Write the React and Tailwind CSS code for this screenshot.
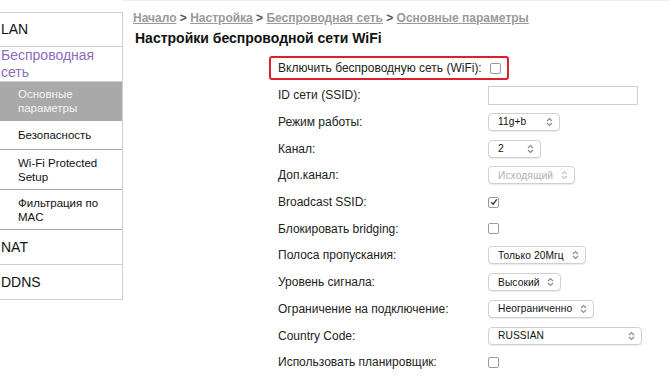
import React from 'react';

const font = { fontFamily: '"Liberation Sans", Arial, sans-serif' };

function Updown({ dim }) {
  return (
    <svg width="7" height="10" viewBox="0 0 7 10" className="shrink-0">
      <path d="M1 4L3.5 1.5L6 4M1 6L3.5 8.5L6 6" fill="none" stroke={dim ? '#c4c4c4' : '#8a8a8a'} strokeWidth="1.1" />
    </svg>
  );
}

function Select({ value, width, disabled }) {
  return (
    <div
      className={`flex h-[18px] items-center justify-between whitespace-nowrap rounded-[4px] border border-[#d0d0d0] bg-white pl-[9px] pr-[6px] text-[10.2px] tracking-[0.1px] shadow-[0_1px_1px_rgba(0,0,0,0.08)] ${disabled ? 'text-[#b0b0b0]' : 'text-[#111]'}`}
      style={{ width }}
    >
      <span>{value}</span>
      <Updown dim={disabled} />
    </div>
  );
}

function Check({ checked }) {
  return (
    <div className="flex h-[11px] w-[11px] items-center justify-center rounded-[2px] border border-[#9a9a9a] bg-white">
      {checked && (
        <svg width="8" height="8" viewBox="0 0 8 8">
          <path d="M1.3 4.2L3.2 6.2L6.8 1.4" fill="none" stroke="#333" strokeWidth="1.3" />
        </svg>
      )}
    </div>
  );
}

const rows = [
  ['ID сети (SSID):', <div className="h-[19px] w-[150px] border border-[#cfcfcf] bg-white" />],
  ['Режим работы:', <Select value="11g+b" width={72} />],
  ['Канал:', <Select value="2" width={53} />],
  ['Доп.канал:', <Select value="Исходящий" width={87} disabled />],
  ['Broadcast SSID:', <Check checked />],
  ['Блокировать bridging:', <Check />],
  ['Полоса пропускания:', <Select value="Только 20Мгц" width={98} />],
  ['Уровень сигнала:', <Select value="Высокий" width={73} />],
  ['Ограничение на подключение:', <Select value="Неограниченно" width={106} />],
  ['Country Code:', <Select value="RUSSIAN" width={154} />],
  ['Использовать планировщик:', <Check />],
];

function SideItem({ children, sub, active, purple, h }) {
  return (
    <div
      className={`flex items-center border-b ${sub ? 'border-[#a8a8a8] pl-[18px] text-[11.5px] leading-[14px]' : 'border-[#cfcfcf] pl-[1px] text-[14px] leading-[17px]'} ${active ? 'bg-[#a9a9a9] text-[#f4f4f4]' : purple ? 'text-[#8d6cc0]' : 'text-[#111]'}`}
      style={{ height: h }}
    >
      <div>{children}</div>
    </div>
  );
}

export default function App() {
  return (
    <div className="flex h-[386px] w-[670px] overflow-hidden bg-white" style={font}>
      {/* sidebar */}
      <div className="mt-[12px] w-[123px] shrink-0 self-start border-r border-t border-[#cfcfcf]">
        <SideItem h={34}>LAN</SideItem>
        <SideItem h={35} purple>Беспроводная<br />сеть</SideItem>
        <SideItem h={39} sub active>Основные<br />параметры</SideItem>
        <SideItem h={29} sub>Безопасность</SideItem>
        <SideItem h={40} sub>Wi-Fi Protected<br />Setup</SideItem>
        <SideItem h={40} sub>Фильтрация по<br />MAC</SideItem>
        <SideItem h={35}>NAT</SideItem>
        <SideItem h={35}>DDNS</SideItem>
      </div>

      {/* content */}
      <div className="flex-1 border-t border-[#ececec] pl-[10px] pt-[10px]">
        <div className="text-[12px] font-bold leading-[15px] text-[#555]">
          <span className="text-[#999] underline">Начало</span> &gt;{' '}
          <span className="text-[#999] underline">Настройка</span> &gt;{' '}
          <span className="text-[#999] underline">Беспроводная сеть</span> &gt;{' '}
          <span className="text-[#999] underline">Основные параметры</span>
        </div>
        <div className="mt-[3px] pl-[2px] text-[14px] font-bold leading-[18px] text-[#111]">
          Настройки беспроводной сети WiFi
        </div>

        <div className="ml-[136px] mt-[9px]">
          <div className="flex h-[24px] w-[240px] items-center rounded-[3px] border-2 border-[#d8232c] pl-[7px]">
            <div className="w-[212px] text-[12px] text-[#222]">Включить беспроводную сеть (WiFi):</div>
            <Check />
          </div>
          <div className="mt-[2px]">
            {rows.map(([label, ctrl]) => (
              <div key={label} className="flex h-[26.7px] items-center">
                <div className="w-[219px] pl-[9px] text-[12px] text-[#222]">{label}</div>
                {ctrl}
              </div>
            ))}
          </div>
        </div>
      </div>
    </div>
  );
}
